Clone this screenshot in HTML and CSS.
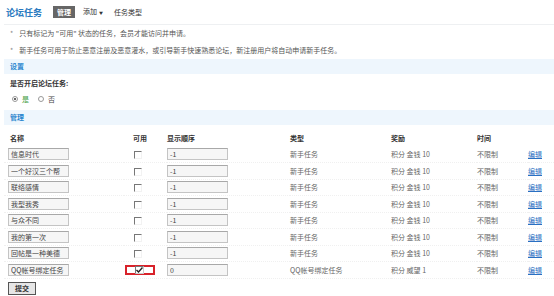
FILE: index.html
```html
<!DOCTYPE html>
<html>
<head>
    <title>论坛任务</title>
    <link rel="stylesheet" href="styles.css">
</head>
<body>
    <div class="topbar">
        <h1>论坛任务</h1>
        <a class="tab active">管理</a>
        <a class="tab">添加<span class="caret">▼</span></a>
        <a class="tab">任务类型</a>
    </div>

    <ul class="notes">
        <li>只有标记为 "可用" 状态的任务，会员才能访问并申请。</li>
        <li>新手任务可用于防止恶意注册及恶意灌水，或引导新手快速熟悉论坛，新注册用户将自动申请新手任务。</li>
    </ul>

    <div class="bar">设置</div>
    <div class="label">是否开启论坛任务:</div>
    <div class="radios">
        <span class="radio on"></span><span class="yes">是</span>
        <span class="radio"></span><span>否</span>
    </div>

    <div class="bar">管理</div>
    <table class="tasks">
        <colgroup>
            <col class="c-name"><col class="c-use"><col class="c-order"><col class="c-type"><col class="c-reward"><col class="c-time"><col class="c-edit">
        </colgroup>
        <thead>
            <tr><th class="pl">名称</th><th class="center">可用</th><th>显示顺序</th><th>类型</th><th>奖励</th><th>时间</th><th></th></tr>
        </thead>
        <tbody>
            <tr><td><input class="txt" value="信息时代"></td><td class="center"><span class="cb"></span></td><td><input class="txt" value="-1"></td><td>新手任务</td><td>积分 金钱 10</td><td>不限制</td><td><a href="#">编辑</a></td></tr>
            <tr><td><input class="txt" value="一个好汉三个帮"></td><td class="center"><span class="cb"></span></td><td><input class="txt" value="-1"></td><td>新手任务</td><td>积分 金钱 10</td><td>不限制</td><td><a href="#">编辑</a></td></tr>
            <tr><td><input class="txt" value="联络感情"></td><td class="center"><span class="cb"></span></td><td><input class="txt" value="-1"></td><td>新手任务</td><td>积分 金钱 10</td><td>不限制</td><td><a href="#">编辑</a></td></tr>
            <tr><td><input class="txt" value="我型我秀"></td><td class="center"><span class="cb"></span></td><td><input class="txt" value="-1"></td><td>新手任务</td><td>积分 金钱 10</td><td>不限制</td><td><a href="#">编辑</a></td></tr>
            <tr><td><input class="txt" value="与众不同"></td><td class="center"><span class="cb"></span></td><td><input class="txt" value="-1"></td><td>新手任务</td><td>积分 金钱 10</td><td>不限制</td><td><a href="#">编辑</a></td></tr>
            <tr><td><input class="txt" value="我的第一次"></td><td class="center"><span class="cb"></span></td><td><input class="txt" value="-1"></td><td>新手任务</td><td>积分 金钱 10</td><td>不限制</td><td><a href="#">编辑</a></td></tr>
            <tr><td><input class="txt" value="回帖是一种美德"></td><td class="center"><span class="cb"></span></td><td><input class="txt" value="-1"></td><td>新手任务</td><td>积分 金钱 10</td><td>不限制</td><td><a href="#">编辑</a></td></tr>
            <tr><td><input class="txt" value="QQ帐号绑定任务"></td><td><span class="mark"><span class="cb checked"><svg width="7" height="6" viewBox="0 0 7 6"><path d="M0.5 3 L2.5 5 L6.5 0.5" fill="none" stroke="#222" stroke-width="1.4"/></svg></span></span></td><td><input class="txt" value="0"></td><td>QQ帐号绑定任务</td><td>积分 威望 1</td><td>不限制</td><td><a href="#">编辑</a></td></tr>
        </tbody>
    </table>

    <button class="submit">提交</button>
</body>
</html>
```

FILE: styles.css
```css
body {
    margin: 0;
    padding: 0 0 0 4px;
    font-family: "Noto Sans CJK SC", "Liberation Sans", sans-serif;
    font-size: 7px;
    color: #444;
    background: #fff;
}
.topbar {
    display: flex;
    align-items: center;
    height: 24px;
    border-bottom: 1px solid #eef0f2;
    padding-left: 2px;
}
.topbar h1 {
    margin: 0 11px 0 0;
    font-size: 9px;
    color: #2a7ac0;
    font-weight: bold;
}
.tab {
    color: #333;
    margin-right: 5px;
    padding: 1px 3px;
    line-height: 10px;
}
.tab.active {
    background: #666;
    color: #fff;
    font-weight: bold;
    padding: 1px 4px;
}
.caret {
    font-size: 4px;
    margin-left: 2px;
    vertical-align: middle;
}
.notes {
    list-style: none;
    margin: 0;
    padding: 0 0 0 6px;
}
.notes li {
    height: 17px;
    line-height: 17px;
    color: #555;
}
.notes li:before {
    content: "*";
    color: #888;
    margin-right: 6px;
}
.bar {
    height: 15px;
    line-height: 15px;
    background: #eef6fd;
    color: #2b86cf;
    font-weight: bold;
    padding-left: 6px;
}
.label {
    height: 17px;
    line-height: 19px;
    font-weight: bold;
    color: #333;
    padding-left: 6px;
}
.radios {
    display: flex;
    align-items: center;
    height: 15px;
    padding-left: 8px;
    margin-bottom: 4px;
    color: #444;
}
.radio {
    width: 6px;
    height: 6px;
    border: 1px solid #999;
    border-radius: 50%;
    margin-right: 4px;
    box-sizing: border-box;
    position: relative;
}
.radio.on:after {
    content: "";
    position: absolute;
    left: 1px;
    top: 1px;
    width: 2px;
    height: 2px;
    background: #333;
    border-radius: 50%;
}
.yes {
    color: #3a9a3a;
    margin-right: 9px;
}
.tasks {
    border-collapse: collapse;
    table-layout: fixed;
    width: 550px;
    margin-top: 5px;
}
.c-name { width: 120px; }
.c-use { width: 43px; }
.c-order { width: 123px; }
.c-type { width: 101px; }
.c-reward { width: 86px; }
.c-time { width: 51px; }
.c-edit { width: 26px; }
.tasks th {
    text-align: left;
    font-weight: bold;
    color: #333;
    height: 16.5px;
    padding: 0;
    line-height: 10px;
}
.tasks th.pl {
    padding-left: 6px;
}
.tasks td {
    height: 15.5px;
    padding: 0;
    line-height: 10px;
    color: #666;
    border-bottom: 1px dotted #f0f0f0;
    white-space: nowrap;
}
.tasks td:first-child {
    padding-left: 4px;
}
.tasks th.center {
    text-align: left;
    padding-left: 9px;
}
.tasks td.center {
    text-align: left;
    padding-left: 10px;
}
.txt {
    width: 61px;
    height: 12px;
    box-sizing: border-box;
    border: 1px solid #c4c4c4;
    border-top-color: #a8a8a8;
    background: #f6f6f6;
    font-family: "Noto Sans CJK SC", "Liberation Sans", sans-serif;
    font-size: 7px;
    color: #444;
    padding: 0 2px;
    margin: 0;
    display: block;
}
.cb {
    display: inline-block;
    width: 6px;
    height: 6px;
    border-top: 1px solid #777;
    border-left: 1px solid #777;
    border-right: 1px solid #f2f2f2;
    border-bottom: 1px solid #f2f2f2;
    vertical-align: middle;
}
.cb.checked {
    width: 7px;
    height: 6px;
    border-right-color: #ccc;
    border-bottom-color: #ccc;
    position: relative;
}
.cb.checked svg {
    position: absolute;
    left: 0;
    top: 0;
}
.mark {
    display: flex;
    align-items: center;
    width: 30px;
    height: 10px;
    border: 2px solid #d8222a;
    box-sizing: border-box;
    margin-left: 1px;
    padding-left: 8px;
}
.tasks a {
    color: #2a6fc2;
    text-decoration: underline;
}
.submit {
    display: block;
    margin: 3px 0 0 4px;
    width: 28px;
    height: 13px;
    padding: 0;
    border: 1px solid #555;
    background: #e6e6e6;
    font-family: "Noto Sans CJK SC", "Liberation Sans", sans-serif;
    font-size: 7px;
    font-weight: bold;
    color: #333;
}
```
